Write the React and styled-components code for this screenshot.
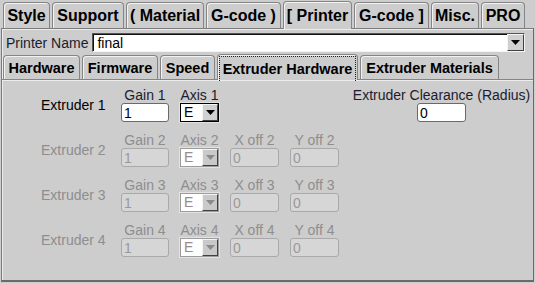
import React from "react";
import styled, { createGlobalStyle } from "styled-components";

const GlobalStyle = createGlobalStyle`
  body {
    margin: 0;
    background: #cdcdcd;
    font-family: "Liberation Sans", Arial, sans-serif;
  }
`;

const topTabs = [
  { label: "Style", w: 47 },
  { label: "Support", w: 72 },
  { label: "( Material", w: 78 },
  { label: "G-code )", w: 75 },
  { label: "[ Printer", w: 69, active: true },
  { label: "G-code ]", w: 75 },
  { label: "Misc.", w: 48 },
  { label: "PRO", w: 44 },
];

const subTabs = [
  { label: "Hardware", w: 77 },
  { label: "Firmware", w: 76 },
  { label: "Speed", w: 55 },
  { label: "Extruder Hardware", w: 141, active: true },
  { label: "Extruder Materials", w: 139 },
];

const Window = styled.div`
  width: 535px;
  height: 283px;
  background: #cdcdcd;
  display: flex;
  flex-direction: column;
  overflow: hidden;
`;

const TabBar = styled.div`
  display: flex;
  align-items: flex-end;
  gap: 2px;
  height: ${(p) => p.$h}px;
  padding-left: ${(p) => p.$pad}px;
  flex-shrink: 0;
`;

const Tab = styled.div`
  box-sizing: border-box;
  width: ${(p) => p.$w}px;
  height: ${(p) => (p.$active ? p.$h + 2 : p.$h)}px;
  margin-bottom: ${(p) => (p.$active ? -1 : 0)}px;
  position: relative;
  z-index: ${(p) => (p.$active ? 2 : 1)};
  background: #cdcdcd;
  border: 1px solid #858585;
  border-bottom: none;
  border-radius: 4px 4px 0 0;
  box-shadow: inset 1px 1px 0 #f2f2f2;
  display: flex;
  align-items: center;
  justify-content: center;
  font-weight: bold;
  font-size: ${(p) => p.$size}px;
  color: #000;
  white-space: nowrap;
`;

const Focus = styled.span`
  box-sizing: border-box;
  width: 100%;
  height: 100%;
  margin: 1px 1px 0;
  border: 1px dotted #222;
  border-bottom: none;
  display: flex;
  align-items: center;
  justify-content: center;
`;

const Panel = styled.div`
  flex: 1;
  margin: 0 1px 1px;
  border: 1px solid #7c7c7c;
  border-right-color: #6a6a6a;
  border-bottom: 2px solid #6a6a6a;
  box-shadow: inset 1px 1px 0 #ececec;
  display: flex;
  flex-direction: column;
  padding: 0 0 0 0;
`;

const NameRow = styled.div`
  display: flex;
  align-items: center;
  gap: 4px;
  padding: 4px 8px 0 4px;
  height: 19px;
`;

const FieldLabel = styled.span`
  font-size: 14px;
  color: ${(p) => (p.$disabled ? "#8e8e8e" : "#1c1c2e")};
  line-height: 16px;
  white-space: nowrap;
`;

const Combo = styled.div`
  flex: 1;
  box-sizing: border-box;
  height: 19px;
  background: #fff;
  border: 1px solid;
  border-color: #555 #f4f4f4 #f4f4f4 #555;
  box-shadow: inset 1px 1px 0 #111;
  display: flex;
  align-items: center;
  justify-content: space-between;
  padding-left: 4px;
  font-size: 14px;
  color: #000;
`;

const ArrowBtn = styled.div`
  box-sizing: border-box;
  width: ${(p) => p.$w}px;
  height: 100%;
  background: ${(p) => (p.$disabled ? "#c9c9c9" : "#d0d0d0")};
  border: 1px solid;
  border-color: #f4f4f4 #404040 #404040 #f4f4f4;
  display: flex;
  align-items: center;
  justify-content: center;
  flex-shrink: 0;
`;

const SubPanel = styled.div`
  flex: 1;
  border-top: 1px solid #858585;
  box-shadow: inset 0 1px 0 #ececec;
  padding: 7px 0 0 39px;
`;

const Grid = styled.div`
  display: grid;
  grid-template-columns: 69px 48px 39px 49px 49px 1fr;
  grid-auto-rows: 35px;
  column-gap: 11px;
  row-gap: 10px;
`;

const RowName = styled.div`
  align-self: center;
  font-size: 14px;
  color: ${(p) => (p.$disabled ? "#8e8e8e" : "#000")};
  white-space: nowrap;
`;

const Field = styled.div`
  display: flex;
  flex-direction: column;
  align-items: center;
`;

const TextBox = styled.input`
  box-sizing: border-box;
  width: ${(p) => p.$w}px;
  height: 19px;
  margin: 0;
  padding: 0 2px;
  border: 1px solid ${(p) => (p.disabled ? "#a9a9a9" : "#6a6a6a")};
  border-radius: 3px;
  background: ${(p) => (p.disabled ? "#d6d6d6" : "#fff")};
  color: ${(p) => (p.disabled ? "#9a9a9a" : "#000")};
  font-family: "Liberation Sans", Arial, sans-serif;
  font-size: 14px;
  outline: none;
`;

const Choice = styled.div`
  box-sizing: border-box;
  width: 39px;
  height: 19px;
  display: flex;
  background: #fff;
  border: 1px solid ${(p) => (p.$disabled ? "#9c9c9c" : "#000")};
  box-shadow: 0 0 0 1px #e2e2e2;
  font-size: 14px;
  color: ${(p) => (p.$disabled ? "#9a8c8c" : "#000")};
`;

const ChoiceValue = styled.span`
  flex: 1;
  line-height: 17px;
  padding-left: 3px;
`;

const Arrow = ({ color }) => (
  <svg width="9" height="5" viewBox="0 0 9 5">
    <polygon points="0,0 9,0 4.5,5" fill={color} />
  </svg>
);

const Empty = styled.div``;

const extruders = [1, 2, 3, 4];

export default function App() {
  return (
    <>
      <GlobalStyle />
      <Window>
        <TabBar $h={28} $pad={3}>
          {topTabs.map((t) => (
            <Tab key={t.label} $w={t.w} $h={26} $size={16} $active={t.active}>
              {t.label}
            </Tab>
          ))}
        </TabBar>
        <Panel>
          <NameRow>
            <FieldLabel>Printer Name</FieldLabel>
            <Combo>
              <span>final</span>
              <ArrowBtn $w={17}>
                <Arrow color="#000" />
              </ArrowBtn>
            </Combo>
          </NameRow>
          <TabBar $h={27} $pad={1}>
            {subTabs.map((t) => (
              <Tab key={t.label} $w={t.w} $h={24} $size={14.5} $active={t.active}>
                {t.active ? <Focus>{t.label}</Focus> : t.label}
              </Tab>
            ))}
          </TabBar>
          <SubPanel>
            <Grid>
              {extruders.map((n) => {
                const off = n > 1;
                return (
                  <React.Fragment key={n}>
                    <RowName $disabled={off}>Extruder {n}</RowName>
                    <Field>
                      <FieldLabel $disabled={off}>Gain {n}</FieldLabel>
                      <TextBox $w={48} disabled={off} defaultValue="1" />
                    </Field>
                    <Field>
                      <FieldLabel $disabled={off}>Axis {n}</FieldLabel>
                      <Choice $disabled={off}>
                        <ChoiceValue>E</ChoiceValue>
                        <ArrowBtn $w={16} $disabled={off}>
                          <Arrow color={off ? "#8a8a8a" : "#000"} />
                        </ArrowBtn>
                      </Choice>
                    </Field>
                    {off ? (
                      <>
                        <Field>
                          <FieldLabel $disabled>X off {n}</FieldLabel>
                          <TextBox $w={49} disabled defaultValue="0" />
                        </Field>
                        <Field>
                          <FieldLabel $disabled>Y off {n}</FieldLabel>
                          <TextBox $w={49} disabled defaultValue="0" />
                        </Field>
                        <Empty />
                      </>
                    ) : (
                      <>
                        <Empty />
                        <Empty />
                        <Field>
                          <FieldLabel>Extruder Clearance (Radius)</FieldLabel>
                          <TextBox $w={49} defaultValue="0" />
                        </Field>
                      </>
                    )}
                  </React.Fragment>
                );
              })}
            </Grid>
          </SubPanel>
        </Panel>
      </Window>
    </>
  );
}
